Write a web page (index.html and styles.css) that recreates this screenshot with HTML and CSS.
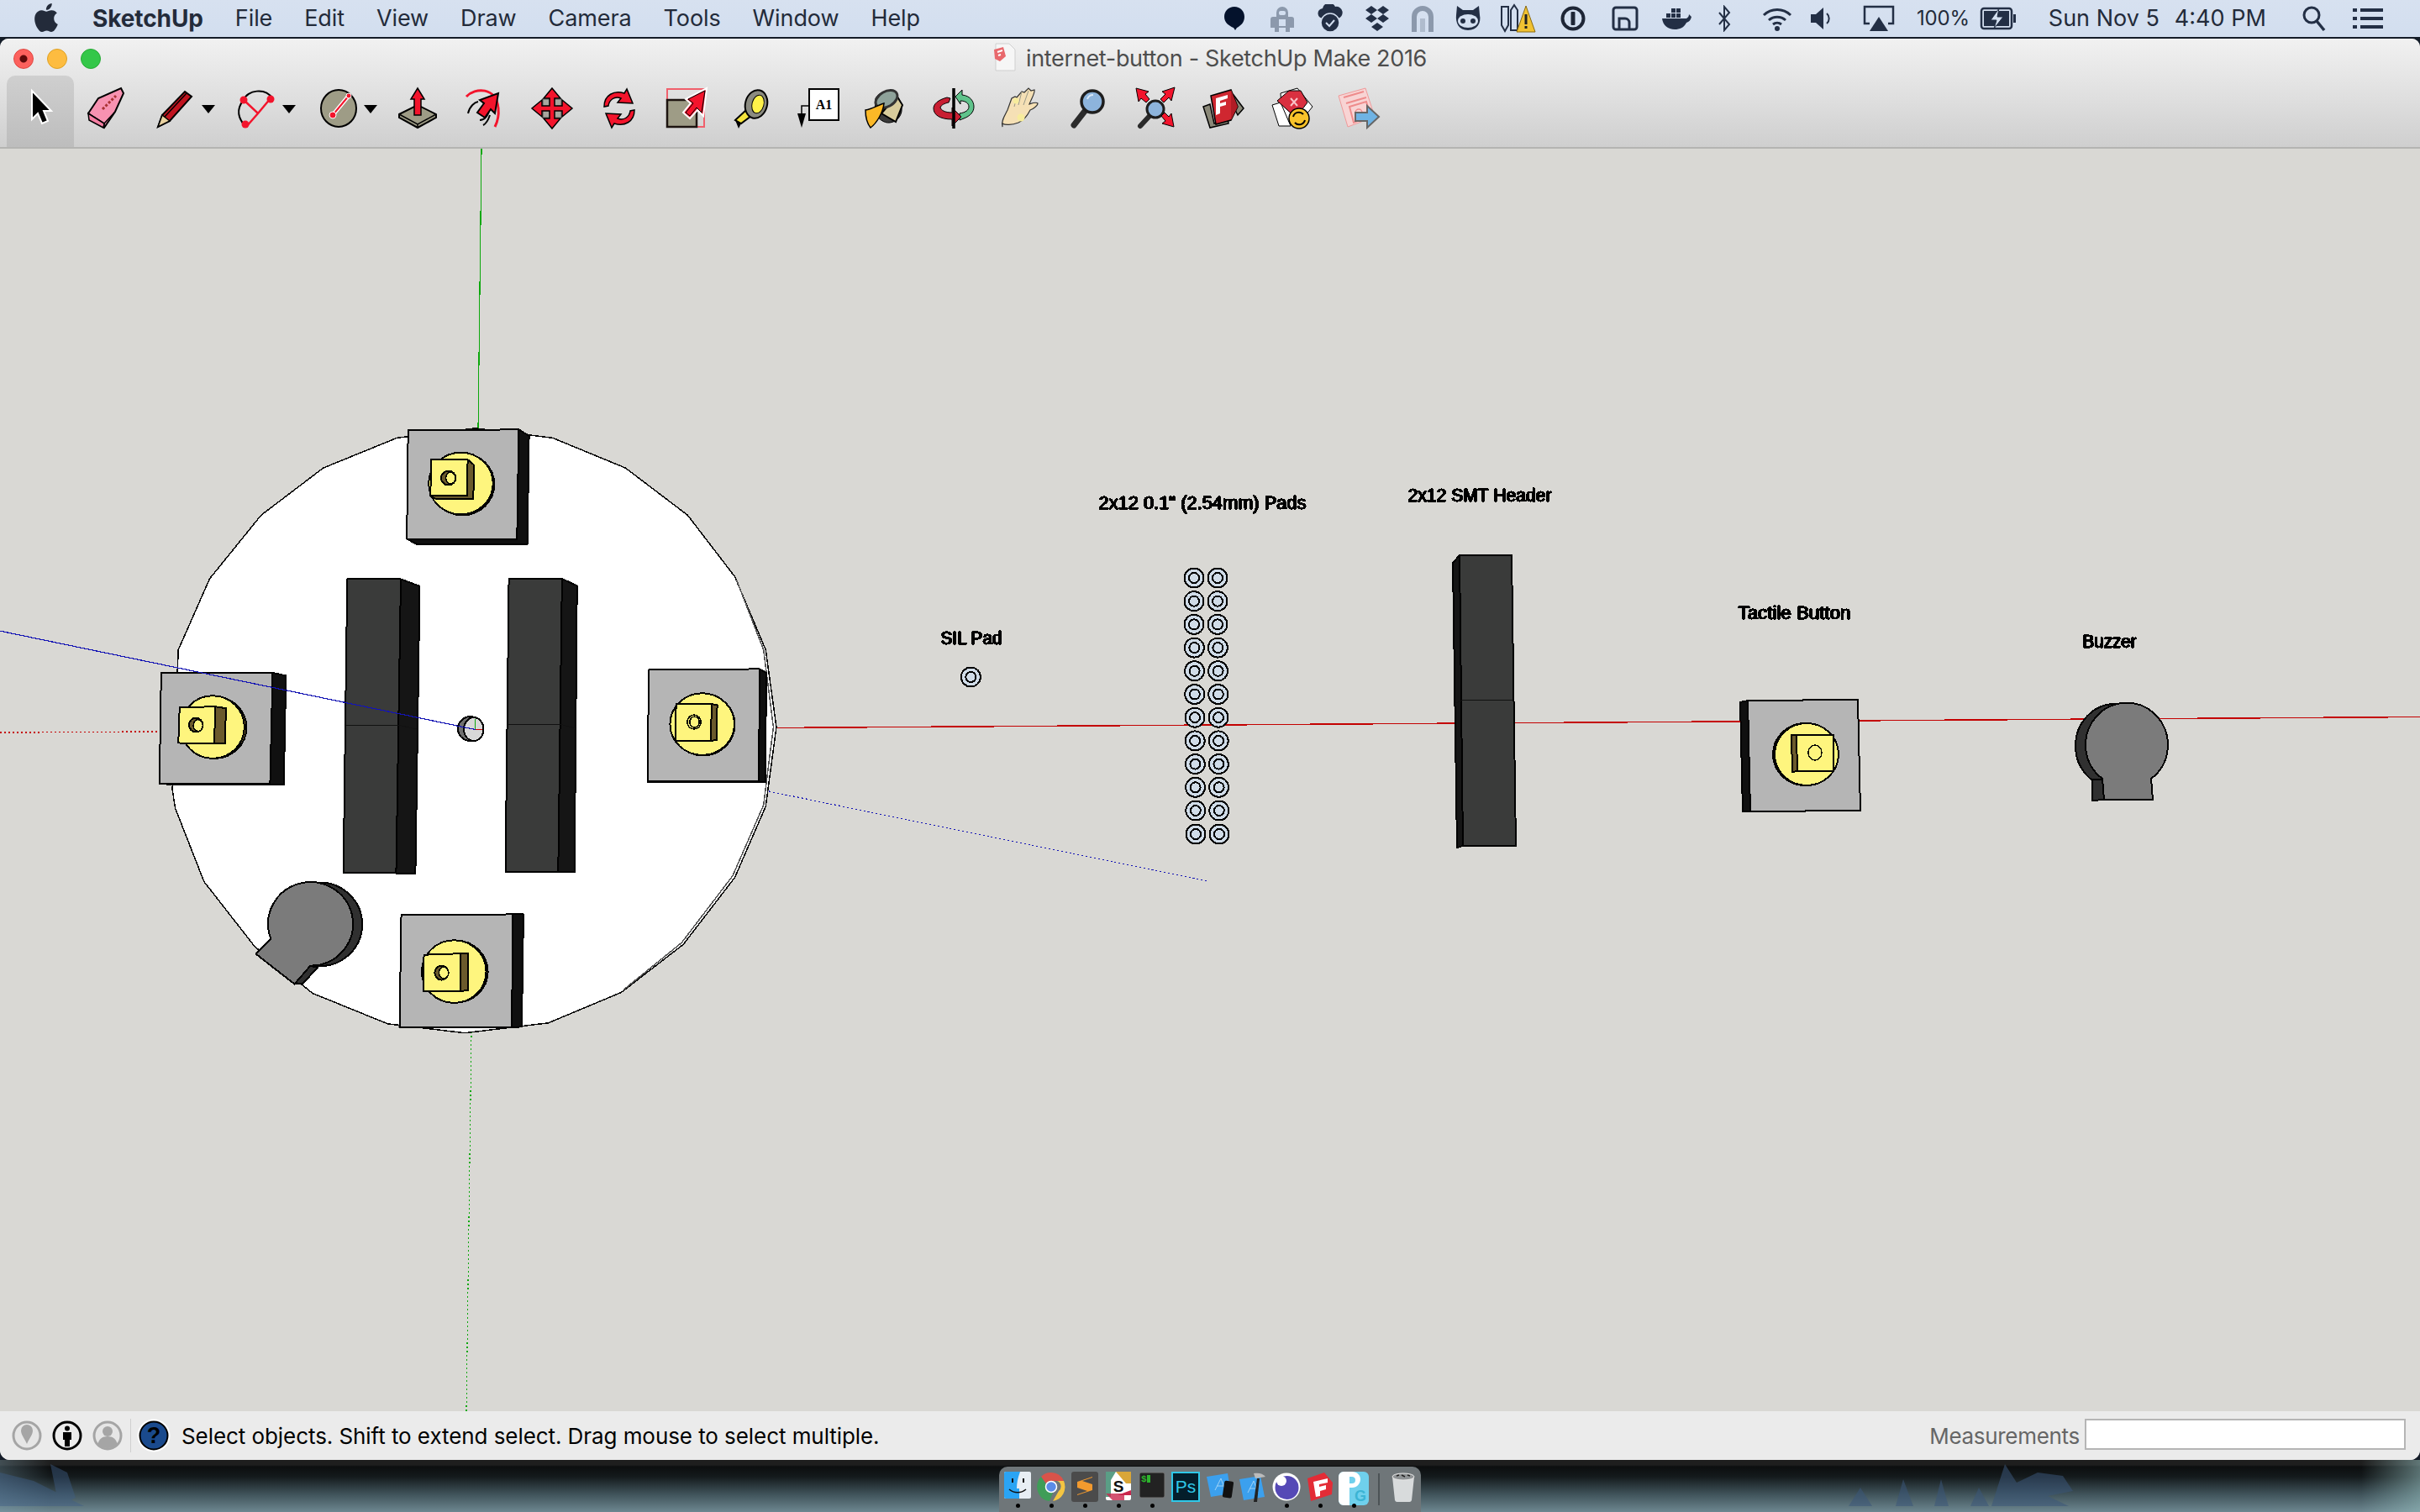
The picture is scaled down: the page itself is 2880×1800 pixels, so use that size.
FILE: index.html
```html
<!DOCTYPE html>
<html lang="en">
<head>
<meta charset="utf-8">
<title>internet-button - SketchUp Make 2016</title>
<link rel="stylesheet" href="styles.css">
</head>
<body>
<header class="menubar">
  <nav class="menus">
    <svg class="apple" width="34" height="36" viewBox="2 1.5 20 21"><path fill="#232b3a" d="M18.71 19.5c-.83 1.24-1.71 2.45-3.05 2.47-1.34.03-1.77-.79-3.29-.79-1.53 0-2 .77-3.27.82-1.31.05-2.3-1.32-3.14-2.53C4.25 17 2.94 12.45 4.7 9.39c.87-1.52 2.43-2.48 4.12-2.51 1.28-.02 2.5.87 3.29.87.78 0 2.26-1.07 3.81-.91.65.03 2.47.26 3.64 1.98-.09.06-2.17 1.28-2.15 3.81.03 3.02 2.65 4.03 2.68 4.04-.03.07-.42 1.44-1.38 2.83M13 3.5c.73-.83 1.94-1.46 2.94-1.5.13 1.17-.34 2.35-1.04 3.19-.69.85-1.83 1.51-2.95 1.42-.15-1.15.41-2.35 1.05-3.11z"/></svg>
    <span class="menu-app">SketchUp</span>
    <span>File</span><span>Edit</span><span>View</span><span>Draw</span><span>Camera</span><span>Tools</span><span>Window</span><span>Help</span>
  </nav>
  <div class="extras">
    <svg width="30" height="30" viewBox="0 0 30 30"><path fill="#04122c" d="M15 1c7 0 12 5 12 12 0 7-5 11-9 13l-2 3-2-3C9 24 3 20 3 13 3 6 8 1 15 1z"/></svg>
    <svg width="30" height="34" viewBox="0 0 30 34"><path fill="#8c99ac" d="M8 10a7 7 0 0 1 14 0v5h4a3 3 0 0 1 3 3v10h-5v5h-5v-5h-8v5H6v-5H1V18a3 3 0 0 1 3-3h4z"/><rect x="11" y="8" width="8" height="5" rx="2" fill="#d3dff0"/><rect x="11" y="18" width="8" height="8" fill="#d3dff0"/></svg>
    <svg width="32" height="34" viewBox="0 0 32 34"><path fill="#232f45" d="M8 17a6 6 0 0 1-1-12 8 8 0 0 1 15-2 7 7 0 0 1 3 14z"/><circle cx="16" cy="22" r="11" fill="#232f45" stroke="#d3dff0" stroke-width="1.5"/><path d="M11 22l4 4 6-7" fill="none" stroke="#d3dff0" stroke-width="2"/></svg>
    <svg width="30" height="32" viewBox="0 0 30 32"><path fill="#232f45" d="M8 1l7 5-7 5-7-5zM22 1l7 5-7 5-7-5zM8 11l7 5-7 5-7-5zM22 11l7 5-7 5-7-5zM15 21l7 5-7 5-7-5z"/></svg>
    <svg width="28" height="32" viewBox="0 0 28 32"><path fill="none" stroke="#8c99ac" stroke-width="6" d="M4 32V14a10 10 0 0 1 20 0v18"/><path fill="#8c99ac" d="M11 32V16h6v16z" opacity=".5"/></svg>
    <svg width="34" height="30" viewBox="0 0 34 30"><path fill="#232f45" d="M4 0l7 5h12l7-5 1 11c2 9-3 18-14 18S2 20 3 11z"/><ellipse cx="17" cy="18" rx="12" ry="8" fill="#d3dff0"/><circle cx="11" cy="18" r="3" fill="#232f45"/><circle cx="23" cy="18" r="3" fill="#232f45"/></svg>
    <svg width="44" height="36" viewBox="0 0 44 36"><path fill="#d3dff0" stroke="#232f45" stroke-width="2" d="M2 4h8v22l-4 7-4-7zM13 8l4-6 4 6v24h-8z"/><path fill="#f1c232" stroke="#8a6a10" d="M31 3l11 31H20z"/><rect x="29.500" y="13" width="3" height="12" fill="#222"/><rect x="29.500" y="27" width="3" height="3" fill="#222"/></svg>
    <svg width="30" height="30" viewBox="0 0 30 30"><circle cx="15" cy="15" r="12.500" fill="#d3dff0" stroke="#1e2636" stroke-width="4"/><rect x="12.500" y="7" width="5" height="16" rx="1" fill="#1e2636"/></svg>
    <svg width="32" height="30" viewBox="0 0 32 30"><rect x="2" y="2" width="28" height="26" rx="3" fill="none" stroke="#232f45" stroke-width="3"/><path d="M9 28V15h7a5 5 0 0 1 5 5v8" fill="none" stroke="#232f45" stroke-width="3"/></svg>
    <svg width="36" height="28" viewBox="0 0 36 28"><path fill="#232f45" d="M1 14h29c2-1 3-3 3-5l3 3c-1 4-3 6-6 7-3 6-8 8-14 8C8 27 2 22 1 14z"/><path fill="#232f45" d="M6 8h5v5H6zM12 8h5v5h-5zM18 8h5v5h-5zM12 2h5v5h-5zM18 2h5v5h-5z"/></svg>
    <svg width="18" height="32" viewBox="0 0 18 32"><path d="M3 9l12 14-6 7V2l6 7L3 23" fill="none" stroke="#232f45" stroke-width="2"/></svg>
    <svg width="38" height="32" viewBox="0 0 38 32"><path d="M3 12a23 23 0 0 1 32 0M9 18a15 15 0 0 1 20 0M14 23a8 8 0 0 1 10 0" fill="none" stroke="#232f45" stroke-width="3"/><circle cx="19" cy="28" r="3" fill="#232f45"/></svg>
    <svg width="26" height="30" viewBox="0 0 26 30"><path fill="#232f45" d="M1 10h6l9-8v26l-9-8H1z"/><path d="M20 9a8 8 0 0 1 0 12" fill="none" stroke="#232f45" stroke-width="2"/></svg>
    <svg class="air" width="38" height="32" viewBox="0 0 38 32"><path d="M8 22H2V2h34v20h-6" fill="none" stroke="#232f45" stroke-width="2.500"/><path fill="#232f45" d="M19 14l11 17H8z"/></svg>
    <span class="ex-text ex-pct">100%</span>
    <svg class="batt" width="44" height="28" viewBox="0 0 44 28"><rect x="2" y="2" width="36" height="24" rx="3" fill="none" stroke="#232f45" stroke-width="2.500"/><rect x="5" y="5" width="30" height="18" fill="#232f45"/><rect x="40" y="9" width="3" height="10" fill="#232f45"/><path d="M23 2L13 16h7l-3 10 11-14h-7z" fill="#d3dff0" stroke="#232f45"/></svg>
    <span class="ex-text ex-date">Sun Nov 5</span>
    <span class="ex-text ex-time">4:40 PM</span>
    <svg class="srch" width="30" height="32" viewBox="0 0 30 32"><circle cx="12" cy="12" r="9" fill="none" stroke="#232f45" stroke-width="3"/><path d="M18 19l9 11" stroke="#232f45" stroke-width="3.500"/></svg>
    <svg class="lst" width="36" height="28" viewBox="0 0 36 28"><path fill="#232f45" d="M0 2h5v4H0zM9 2h27v4H9zM0 12h5v4H0zM9 12h27v4H9zM0 22h5v4H0zM9 22h27v4H9z"/></svg>
  </div>
</header>

<main class="window">
  <div class="titlebar">
    <div class="lights"><span class="light red"></span><span class="light yellow"></span><span class="light green"></span></div>
    <div class="title">
      <svg width="28" height="34" viewBox="0 0 28 34"><path d="M3 1h16l7 7v25H3z" fill="#f6f6f6" stroke="#cfcfcf"/><path d="M1 8l11-3 3 11-7 6-6-3z" fill="#e8686c"/><path d="M5 11l6-2M6 15l3-1" stroke="#fff" stroke-width="2"/></svg>
      <span>internet-button - SketchUp Make 2016</span>
    </div>
  </div>
  <div class="toolbar">
    <div class="tool active"><svg viewBox="0 0 48 48"><path d="M14 3v34l7-7 5 12 7-3-5-12h9z" fill="#000" stroke="#fff" stroke-width="2"/></svg></div>
    <div class="tool"><svg viewBox="0 0 48 48"><path d="M1 30L13 12 40 0l3 6-10 22-13 19z" fill="#f792b1" stroke="#000" stroke-width="2"/><path d="M1 30l19 12 13-14M20 42v5" fill="none" stroke="#000" stroke-width="1.500"/><path d="M1 30l19 12-1 5-17-9z" fill="#f57fa3" stroke="#000" stroke-width="1.500"/><path d="M18 25l16-16" stroke="#a33" stroke-width="3" stroke-dasharray="3 2"/></svg></div>
    <div class="tool dd"><svg viewBox="0 0 48 48"><path d="M2 46l5-14L34 4l8 6-26 29z" fill="#c01420" stroke="#000" stroke-width="2"/><path d="M2 46l5-14 9 7z" fill="#e9d2a0" stroke="#000" stroke-width="1.500"/><path d="M10 34L36 6" stroke="#000" stroke-width="1.500"/></svg><i class="caret"></i></div>
    <div class="tool dd"><svg viewBox="0 0 48 48"><path d="M8 14C12 2 34-1 42 12M8 14C-2 26 2 36 10 46" fill="none" stroke="#000" stroke-width="2"/><path d="M8 14l17 16 15-18M25 30L11 46" fill="none" stroke="#f3142c" stroke-width="2.500"/><circle cx="8" cy="14" r="4.500" fill="#f3142c"/><circle cx="40" cy="13" r="4.500" fill="#f3142c"/><circle cx="10" cy="43" r="4.500" fill="#f3142c"/></svg><i class="caret"></i></div>
    <div class="tool dd"><svg viewBox="0 0 48 48"><ellipse cx="24" cy="24" rx="21" ry="22" fill="#9e9c86" stroke="#000" stroke-width="2"/><path d="M17 32L36 9" stroke="#fff" stroke-width="5"/><path d="M17 32L36 9" stroke="#f3142c" stroke-width="2"/><circle cx="17" cy="32" r="4" fill="#f3142c" stroke="#fff"/><circle cx="36" cy="9" r="3" fill="#f3142c" stroke="#fff"/></svg><i class="caret"></i></div>
    <div class="tool"><svg viewBox="0 0 48 48"><path d="M2 31L24 20l22 11v4L24 47 2 35z" fill="#9e9c86" stroke="#000" stroke-width="2"/><path d="M2 31l22 12 22-12M24 43v4" fill="none" stroke="#000" stroke-width="1.500"/><path d="M24 0l8 13h-4v19h-8V13h-4z" fill="#f3142c" stroke="#000" stroke-width="1.500"/></svg></div>
    <div class="tool"><svg viewBox="0 0 48 48"><path d="M2 10C12-1 38-2 40 24c1 9-1 16-4 22" fill="none" stroke="#f3142c" stroke-width="3"/><path d="M4 30c2-9 8-13 12-14M18 38c6 0 10-6 12-14M22 44c4-2 6-6 8-12" fill="none" stroke="#000" stroke-width="2"/><path d="M40 6l-4 24-5-5-7 10-9-6 8-11-5-4z" fill="#f3142c" stroke="#000" stroke-width="2"/></svg></div>
    <div class="tool"><svg viewBox="0 0 48 48"><rect x="13" y="13" width="22" height="22" fill="#a8a79f" stroke="#555"/><path d="M24 0l10 12h-7v9h9v-7l12 10-12 10v-7h-9v9h7L24 48 14 36h7v-9h-9v7L0 24l12-10v7h9v-9h-7z" fill="#f3142c" stroke="#000" stroke-width="1.500"/></svg></div>
    <div class="tool"><svg viewBox="0 0 48 48"><path d="M6 22C6 8 18 2 30 6l3-5 7 17-18-1 4-5c-8-3-14 2-15 9z" fill="#f3142c" stroke="#000" stroke-width="1.500"/><path d="M42 26c0 14-12 20-24 16l-3 5L8 30l18 1-4 5c8 3 14-2 15-9z" fill="#f3142c" stroke="#000" stroke-width="1.500"/></svg></div>
    <div class="tool"><svg viewBox="0 0 48 48"><rect x="1" y="1" width="44" height="45" fill="none" stroke="#f0606c" stroke-width="2"/><rect x="1" y="14" width="35" height="32" fill="#9e9c86" stroke="#1d1410" stroke-width="2.500"/><path d="M48 0l-4 33-7-7-9 10-8-7 9-11-6-5z" fill="#f3142c" stroke="#fff" stroke-width="2"/><path d="M46 3l-4 26-6-6-8 10-5-4 9-11-6-5z" fill="#f3142c" stroke="#000" stroke-width="1"/></svg></div>
    <div class="tool"><svg viewBox="0 0 48 48"><path d="M2 38l13-12 6 7L9 42z" fill="#f5e33b" stroke="#000" stroke-width="2"/><path d="M2 38l4 10 3-6z" fill="#000"/><ellipse cx="27" cy="19" rx="13" ry="17" transform="rotate(15 27 19)" fill="#8a8a80" stroke="#000" stroke-width="2"/><ellipse cx="29" cy="19" rx="7" ry="11" transform="rotate(15 29 19)" fill="#fff24a" stroke="#000"/></svg></div>
    <div class="tool"><svg viewBox="0 0 48 48"><rect x="12" y="1" width="35" height="37" fill="#fff" stroke="#000" stroke-width="2"/><text x="29.500" y="25" class="a1">A1</text><path d="M12 21H3v14" fill="none" stroke="#000" stroke-width="1.500"/><path d="M-2 30h10L3 47z" fill="#000"/></svg></div>
    <div class="tool"><svg viewBox="0 0 48 48"><path d="M13 12C22-2 42 1 44 24c1 6-4 16-14 17-7 1-15-5-18-13z" fill="#3b3b3b" stroke="#000"/><path d="M20 30l17 10 8-20-7-11z" fill="#d8cc9c" stroke="#000" stroke-width="2"/><ellipse cx="26" cy="13" rx="14" ry="9" transform="rotate(-30 26 13)" fill="#8ea29a" stroke="#333" stroke-width="3"/><path d="M1 26c8-1 15-6 22-8-1 11-9 24-16 29C3 42 1 34 1 26z" fill="#fbb827" stroke="#000" stroke-width="1.500"/></svg></div>
    <div class="tool"><svg viewBox="0 0 48 48"><path d="M26 10l8-8v6c10 1 14 8 14 14 0 6-4 11-12 14l-5 2v-8c7-1 11-4 11-8 0-4-4-7-10-7v4z" fill="#5fc38b" stroke="#000"/><path d="M20 12l-2 5c-5 1-9 3-10 6 1 3 5 6 14 6v-6l11 11-11 11v-8C8 37 0 32 0 24c0-5 5-10 16-13z" fill="#c81e32" stroke="#000"/><path d="M24 0v48" stroke="#000" stroke-width="3.500"/></svg></div>
    <div class="tool"><svg viewBox="0 0 48 48"><path d="M2 46c-2-7 3-14 6-20l5-14 4-2 2 1 6-7 3 1 5-5 3 3 4-1c1 4-4 11-6 17 3-1 8-3 10-1 0 3-6 7-9 8-3 6-7 12-14 15-8 3-16 3-19 1z" fill="#f5e0b5" stroke="#333" stroke-width="1.200"/><path d="M19 11l-3 11M25 4l-4 16M33 3l-6 17" fill="none" stroke="#998" stroke-width="1"/><circle cx="18" cy="15" r="3.500" fill="#f7ec9c"/><circle cx="24" cy="35" r="4.500" fill="#f7ec9c"/></svg></div>
    <div class="tool"><svg viewBox="0 0 48 48"><path d="M8 44L22 26" stroke="#2b2b2b" stroke-width="7" stroke-linecap="round"/><circle cx="30" cy="16" r="13" fill="#8db4dc" stroke="#1e1e1e" stroke-width="3.500"/><path d="M24 13c1-3 4-5 7-5" stroke="#d8e8f8" stroke-width="2" fill="none"/></svg></div>
    <div class="tool"><svg viewBox="0 0 48 48"><path d="M6 45L18 32" stroke="#2b2b2b" stroke-width="6" stroke-linecap="round"/><circle cx="24" cy="25" r="10" fill="#8db4dc" stroke="#1e1e1e" stroke-width="3"/><path d="M1 0l15 4-4 3 5 6-4 4-6-5-3 4zM47-1l-4 16-3-4-6 6-4-4 6-6-4-3zM46 46l-14-4 4-3-5-6 4-4 5 5 3-4z" fill="#f3142c" stroke="#000"/></svg></div>
    <div class="tool"><svg viewBox="0 0 48 48"><path d="M0 22l8-3 5 23 16-6 1 6-22 5z" fill="#8a8878" stroke="#000" stroke-width="1.500"/><path d="M36 8l12 16-7 8-6-12z" fill="#8a8878" stroke="#000" stroke-width="1.500"/><path d="M9 9l24-7 8 20-8 16-18 5z" fill="#cf2730" stroke="#000" stroke-width="1.500"/><path d="M33 2l8 20-8 16z" fill="#b01c25"/><path d="M15 12l14-4v4l-9 3v3l7-2v4l-7 2v8l-5 2z" fill="#fff"/></svg></div>
    <div class="tool"><svg viewBox="0 0 48 48"><path d="M12 6l20-6 18 22-16 20-20-4z" fill="#fff" stroke="#000"/><path d="M2 20l10-3 12 28-14 0z" fill="#fff" stroke="#000"/><path d="M8 15L22 3h14l8 14-14 18z" fill="#d93040" stroke="#000"/><path d="M24 12l8 9M32 12l-8 9" stroke="#f9c5c9" stroke-width="2"/><circle cx="34" cy="36" r="12" fill="#f9c32a" stroke="#000" stroke-width="1.500"/><path d="M27 34a7 7 0 0 1 12-3M41 38a7 7 0 0 1-12 3" fill="none" stroke="#000" stroke-width="2"/></svg></div>
    <div class="tool"><svg viewBox="0 0 48 48"><path d="M1 9L33 0l11 34-32 12z" fill="#f8d4d4" stroke="#f09a9a"/><path d="M7 11l24-7M10 18l24-7M14 22l20-6 5 17-20 8z" fill="none" stroke="#ee8c8c" stroke-width="2"/><circle cx="25" cy="29" r="4" fill="none" stroke="#ee8c8c" stroke-width="1.500"/><path d="M21 29h14v-8l14 13-14 13v-8H21z" fill="#6fb3e4" stroke="#666" stroke-width="2"/></svg></div>
  </div>

  <div class="viewport">
    <svg class="scene" width="2880" height="1504" viewBox="0 177 2880 1504">
      <defs>
        <filter id="jag" x="-5%" y="-20%" width="110%" height="140%" color-interpolation-filters="sRGB">
          <feOffset in="SourceGraphic" dx="1" dy="0" result="shift"/>
          <feMerge result="both"><feMergeNode in="SourceGraphic"/><feMergeNode in="shift"/></feMerge>
          <feComponentTransfer in="both"><feFuncA type="discrete" tableValues="0 1 1 1"/></feComponentTransfer>
        </filter>
      </defs>
      <path class="ax-g" d="M573 177L569 512"/>
      <path class="ax-g dot" d="M561 1228L555 1681"/>
      <path class="ax-r" d="M920 866.500L2880 853.500"/>
      <path class="ax-r dot" d="M0 872L190 871"/>
      <path class="ax-b dot" d="M915 942L1437 1049"/>

      <g transform="matrix(.5102 0 0 .4975 150 480)">
        <polygon class="disk" points="632,83 460,155 315,268 195,420 122,590 108,925 115,970 182,1145 300,1300 435,1412 610,1485 790,1507 985,1483 1155,1410 1300,1295 1420,1135 1492,965 1517,775 1492,590 1420,415 1310,268 1165,155 995,83 815,60"/>
        <polyline class="rim" points="1160,1404 1296,1291 1415,1131 1487,962 1510,775 1487,590 1424,423"/>

        <polygon class="side" points="916,63 940,78 936,338 680,338 655,325 912,325"/>
        <polygon class="plate" points="658,65 916,63 912,325 655,325"/>
        <ellipse class="brown" cx="785" cy="194" rx="74" ry="74"/>
        <ellipse class="yel" cx="781" cy="192" rx="75" ry="74"/>
        <polygon class="brown" points="797,135 812,148 810,230 725,230 710,222 795,222"/>
        <polygon class="yel" points="712,135 797,135 795,222 710,222"/>
        <ellipse class="brown" cx="752" cy="179" rx="17" ry="17"/><ellipse class="yel thin" cx="757" cy="179" rx="11" ry="14"/>

        <polygon class="side" points="342,645 373,652 368,913 110,913 78,910 336,910"/>
        <polygon class="plate" points="82,645 342,645 336,910 78,910"/>
        <ellipse class="brown" cx="207" cy="776" rx="74" ry="74"/>
        <ellipse class="yel" cx="202" cy="775" rx="74" ry="75"/>
        <polygon class="brown" points="208,726 233,730 231,815 206,815"/>
        <polygon class="yel" points="125,728 208,726 206,815 122,813"/>
        <ellipse class="brown" cx="163" cy="770" rx="16" ry="17"/><ellipse class="yel thin" cx="168" cy="771" rx="11" ry="14"/>

        <polygon class="side" points="1478,636 1493,645 1492,906 1217,906 1476,904"/>
        <polygon class="plate" points="1219,638 1478,636 1476,904 1217,904"/>
        <ellipse class="brown" cx="1346" cy="769" rx="74" ry="74"/>
        <ellipse class="yel" cx="1344" cy="768" rx="75" ry="74"/>
        <polygon class="brown" points="1366,720 1379,722 1378,806 1364,808"/>
        <polygon class="yel" points="1283,720 1366,720 1364,808 1282,808"/>
        <ellipse class="yel thin" cx="1325" cy="763" rx="16" ry="17"/><ellipse class="yel thin" cx="1326" cy="763" rx="11" ry="13"/>

        <polygon class="side" points="902,1223 927,1223 923,1492 900,1494"/>
        <polygon class="plate" points="642,1225 902,1223 900,1494 638,1494"/>
        <ellipse class="brown" cx="770" cy="1360" rx="74" ry="74"/>
        <ellipse class="yel" cx="765" cy="1360" rx="75" ry="75"/>
        <polygon class="brown" points="780,1317 798,1316 798,1405 780,1407"/>
        <polygon class="yel" points="695,1320 780,1317 780,1407 693,1407"/>
        <ellipse class="brown" cx="736" cy="1363" rx="16" ry="17"/><ellipse class="yel thin" cx="741" cy="1363" rx="11" ry="14"/>

        <polygon class="hdr-side" points="641,421 685,438 675,1125 630,1125"/>
        <polygon class="hdr" points="516,421 641,421 630,1123 507,1123"/>
        <polyline class="seam" points="512,770 635,770 678,780"/>
        <polygon class="hdr-side" points="1017,420 1052,437 1046,1122 1008,1122"/>
        <polygon class="hdr" points="893,420 1017,420 1008,1122 885,1122"/>
        <polyline class="seam" points="889,768 1012,768 1048,778"/>

        <circle class="org-back" cx="803" cy="779" r="29"/>
        <ellipse class="org" cx="811" cy="780" rx="23" ry="28"/>
        <path class="ax-g-thin" d="M815 755V781"/><path class="ax-r-thin" d="M815 781H832"/>
        <path class="ax-b-thin" d="M-294 545L815 781"/>

        <ellipse class="bz-back" cx="452" cy="1247" rx="99" ry="100"/>
        <polygon class="bz-back" points="393,1390 413,1388 447,1350 420,1345"/>
        <path class="bz" d="M338 1282A99 100 0 1 1 430 1346L393 1390L303 1318Z"/>
      </g>

      <g class="pads">
        <ellipse cx="1155.400" cy="806" rx="11.500" ry="11.500"/><ellipse class="in" cx="1155.400" cy="806" rx="6" ry="6"/>
        <g id="pr1"><ellipse cx="1421" cy="688" rx="11.500" ry="11.500"/><ellipse class="in" cx="1421" cy="688" rx="6" ry="6"/><ellipse cx="1449" cy="688" rx="11.500" ry="11.500"/><ellipse class="in" cx="1449" cy="688" rx="6" ry="6"/></g>
        <use href="#pr1" y="27.700"/>
        <use href="#pr1" y="55.400"/>
        <use href="#pr1" x=".4" y="83.100"/>
        <use href="#pr1" x=".6" y="110.800"/>
        <use href="#pr1" x=".8" y="138.500"/>
        <use href="#pr1" x="1" y="166.200"/>
        <use href="#pr1" x="1.200" y="193.900"/>
        <use href="#pr1" x="1.400" y="221.600"/>
        <use href="#pr1" x="1.600" y="249.300"/>
        <use href="#pr1" x="1.800" y="277"/>
        <use href="#pr1" x="2" y="305"/>
      </g>

      <polygon class="hdr-side" points="1729,670 1737,661 1741,1007 1734,1009"/>
      <polygon class="hdr" points="1737,661 1799,661 1804,1007 1741,1007"/>
      <polyline class="seam" points="1731,838 1739,834 1802,833"/>

      <polygon class="side" points="2071,836 2080,834 2083,966 2074,966"/>
      <polygon class="plate" points="2080,834 2211,833 2214,965 2083,966"/>
      <ellipse class="brown" cx="2148" cy="898" rx="38" ry="37"/>
      <ellipse class="yel" cx="2150" cy="898" rx="38" ry="37"/>
      <polygon class="brown" points="2132,875 2138,875 2139,918 2133,919"/>
      <polygon class="yel" points="2138,875 2182,875 2182,918 2139,918"/>
      <ellipse class="yel thin" cx="2160" cy="896" rx="8" ry="9"/>

      <ellipse class="bz-back" cx="2517" cy="888" rx="47" ry="50"/>
      <polygon class="bz-back" points="2490,928 2503,928 2504,952 2490,953"/>
      <path class="bz" d="M2502 927A49 50 0 1 1 2560 927L2562 952L2504 952Z"/>

      <g filter="url(#jag)">
        <text class="lbl" x="1307" y="606" textLength="247" lengthAdjust="spacingAndGlyphs">2x12 0.1" (2.54mm) Pads</text>
        <text class="lbl" x="1675" y="597" textLength="171" lengthAdjust="spacingAndGlyphs">2x12 SMT Header</text>
        <text class="lbl" x="1119" y="767" textLength="73" lengthAdjust="spacingAndGlyphs">SIL Pad</text>
        <text class="lbl" x="2068" y="737" textLength="134" lengthAdjust="spacingAndGlyphs">Tactile Button</text>
        <text class="lbl" x="2478" y="771" textLength="64" lengthAdjust="spacingAndGlyphs">Buzzer</text>
      </g>
    </svg>
  </div>

  <footer class="statusbar">
    <div class="status-icons">
      <svg width="36" height="36" viewBox="0 0 36 36"><circle cx="18" cy="18" r="16" fill="#e6e6e6" stroke="#a5a5a5" stroke-width="3"/><path d="M11 12a7 7 0 0 1 14 0c0 5-4 9-7 16-3-7-7-11-7-16z" fill="#a5a5a5"/></svg>
      <svg width="36" height="36" viewBox="0 0 36 36"><circle cx="18" cy="18" r="16" fill="#ebebeb" stroke="#000" stroke-width="3"/><circle cx="18" cy="9.500" r="3" fill="#000"/><path d="M13 14h10v9h-2v8h-6v-8h-2z" fill="#000"/></svg>
      <svg width="36" height="36" viewBox="0 0 36 36"><circle cx="18" cy="18" r="16" fill="#e6e6e6" stroke="#a5a5a5" stroke-width="3"/><circle cx="18" cy="13" r="6" fill="#a5a5a5"/><path d="M6 30c1-8 6-11 12-11s11 3 12 11c-6 4-18 4-24 0z" fill="#a5a5a5"/></svg>
      <i class="status-sep"></i>
      <svg class="help" width="40" height="40" viewBox="0 0 40 40"><circle cx="20" cy="20" r="19.500" fill="#fff"/><circle cx="20" cy="20" r="16.500" fill="#1a4a8d" stroke="#000" stroke-width="2"/><text x="20" y="29" class="help-q">?</text></svg>
    </div>
    <span class="status-msg">Select objects. Shift to extend select. Drag mouse to select multiple.</span>
    <div class="measure"><label for="vcb">Measurements</label><input id="vcb" type="text"></div>
  </footer>
</main>

<section class="desk">
  <svg class="wall" width="2880" height="55" viewBox="0 1745 2880 55">
    <path fill="#3a5578" opacity=".55" d="M2200 1800l14-22 14 22zM2256 1800l9-32 12 32zM2302 1800l8-32 9 32zM2345 1800l10-22 12 22zM2370 1800l16-50 14 22 25 -12 30 4 12 18-30 6 25 12z"/>
    <path fill="#3f5e85" opacity=".45" d="M0 1760l40 10 60 30H0zM60 1750l20 10 10 30-20 10z"/>
  </svg>
  <div class="dock">
    <div class="dock-item on"><svg width="32" height="32" viewBox="0 0 32 32"><rect width="32" height="32" rx="2" fill="#e8eef4"/><path d="M0 2a2 2 0 0 1 2-2h17c-3 8-4 14-4 20h3v12H2a2 2 0 0 1-2-2z" fill="#2aa4f4"/><path d="M10 8v5M23 8v5" stroke="#111" stroke-width="2"/><path d="M6 21c6 5 14 5 20 0" stroke="#111" stroke-width="1.500" fill="none"/></svg></div>
    <div class="dock-item on"><svg width="34" height="36" viewBox="0 0 34 36"><path d="M17 1a16 17 0 0 1 15 10H17a7 7 0 0 0-6 3L5 6a16 17 0 0 1 12-5z" fill="#d9534a"/><path d="M32 11a16 17 0 0 1-13 24l7-12a7 7 0 0 0-2-12z" fill="#f4c542"/><path d="M5 6l7 11a7 7 0 0 0 7 8l-4 10A16 17 0 0 1 5 6z" fill="#3f9d58"/><circle cx="17" cy="18" r="6.500" fill="#5b8ce8" stroke="#fff" stroke-width="1.500"/></svg></div>
    <div class="dock-item on"><svg width="32" height="36" viewBox="0 0 32 36"><rect width="32" height="36" rx="3" fill="#4b4b4b"/><path d="M25 6L7 12v7l12 4-12 4v1l18-6v-7L13 11l12-4z" fill="#f29a2e"/></svg></div>
    <div class="dock-item on"><svg width="30" height="34" viewBox="0 0 30 34"><rect width="30" height="34" rx="2" fill="#fff"/><path d="M0 0h12L6 10v20H0z" fill="#5a9e86"/><path d="M12 0h18v14H24z" fill="#d9a638"/><path d="M30 14v14H14l16-6z" fill="#c9274d"/><path d="M0 26l8 8h14v-8z" fill="#c9274d" opacity=".8"/><text x="15" y="24" class="slack-s">S</text></svg></div>
    <div class="dock-item on"><svg width="32" height="32" viewBox="0 0 32 32"><rect x="1" y="1" width="30" height="30" rx="2" fill="#222" stroke="#777"/><text x="3" y="12" class="term">$</text><rect x="10" y="4" width="4" height="9" fill="#2cb52c"/></svg></div>
    <div class="dock-item"><svg width="34" height="36" viewBox="0 0 34 36"><rect x="1" y="1" width="32" height="34" fill="#041e2b" stroke="#2fc8e8" stroke-width="2"/><text x="17" y="25" class="ps">Ps</text></svg></div>
    <div class="dock-item"><svg width="34" height="34" viewBox="0 0 34 34"><path d="M2 6l25-4 4 24-24 4z" fill="#3ba0ee"/><path d="M12 22l7-14 5 14M14 17h9" stroke="#9fd2f7" fill="none"/><rect x="22" y="11" width="11" height="20" rx="2" transform="rotate(8 27 21)" fill="#111"/></svg></div>
    <div class="dock-item"><svg width="34" height="36" viewBox="0 0 34 36"><path d="M1 9l25-4 5 25-25 4z" fill="#3ba0ee"/><path d="M11 25l7-14 5 14M13 20h9" stroke="#9fd2f7" fill="none"/><path d="M22 8l-4 28h4l3-28z" fill="#222"/><path d="M18 2c6-1 11 0 14 4l-12 2z" fill="#bbb"/></svg></div>
    <div class="dock-item on"><svg width="34" height="36" viewBox="0 0 34 36"><circle cx="17" cy="18" r="16.500" fill="#fff"/><ellipse cx="17.500" cy="19" rx="14" ry="14" fill="#5549b6"/><circle cx="11" cy="11" r="6" fill="#fff"/></svg></div>
    <div class="dock-item on"><svg width="32" height="36" viewBox="0 0 32 36"><path d="M1 8L21 1l10 12-1 14L5 35z" fill="#e32c36"/><path d="M8 12l17-4v5L15 15v3l8-2v5l-7 2v6l-5 1z" fill="#fff"/></svg></div>
    <div class="dock-item on"><svg width="36" height="40" viewBox="0 0 36 40"><rect width="36" height="40" rx="6" fill="#6fd0ec"/><path d="M0 6a6 6 0 0 1 6-6h10c6 0 10 4 10 9s-4 10-10 10h-3v21H6a6 6 0 0 1-6-6z" fill="#fff"/><path d="M13 6h3c2 0 4 1 4 4s-2 4-4 4h-3z" fill="#6fd0ec"/><text x="26" y="35" class="pg">G</text></svg></div>
    <i class="dock-sep"></i>
    <div class="dock-item"><svg width="28" height="36" viewBox="0 0 28 36"><path d="M1 6h26l-3 28a3 3 0 0 1-3 2H7a3 3 0 0 1-3-2z" fill="#d8dbdc"/><ellipse cx="14" cy="6" rx="13" ry="4" fill="#8e9294" stroke="#e8e8e8"/><path d="M6 5l3-1M12 4l4 2M19 4l3 1" stroke="#222" stroke-width="1.500"/></svg></div>
  </div>
</section>
</body>
</html>
```

FILE: styles.css
```css
* { box-sizing: border-box; }
html, body { margin: 0; padding: 0; }
body {
  width: 2880px;
  height: 1800px;
  overflow: hidden;
  display: flex;
  flex-direction: column;
  background: #141c28;
  font-family: Inter, "Liberation Sans", sans-serif;
}

/* menu bar */
.menubar {
  flex: 0 0 46px;
  height: 46px;
  display: flex;
  justify-content: space-between;
  background: linear-gradient(#d7e1f0, #d2deef);
  border-bottom: 2px solid #141c28;
  color: #232b3a;
  font-size: 27px;
  line-height: 44px;
}
.menus { display: flex; align-items: center; gap: 38px; padding-left: 38px; letter-spacing: -.1px; }
.apple { margin-right: 0; margin-top: -2px; }
.menu-app { font-size: 28px; font-weight: 700; }
.extras {
  display: grid;
  grid-template-columns: 57px 57px 57px 56px 52px 56px 64px 66px 58px 64px 50px 76px 28px 100px auto auto auto auto auto auto;
  justify-content: start;
  width: 1440px;
  align-items: center;
  justify-items: center;
}
.extras .air { justify-self: end; margin-right: 26px; }
.ex-text { font-size: 27px; white-space: nowrap; }
.ex-pct { font-size: 24px; letter-spacing: -.2px; }
.batt { margin-left: 12px; }
.ex-date { margin-left: 38px; }
.ex-time { margin-left: 18px; }
.srch { margin-left: 42px; }
.lst { margin-left: 31px; }

/* window */
.window {
  flex: 0 0 1692px;
  display: flex;
  flex-direction: column;
  border-radius: 10px 10px 12px 12px;
  overflow: hidden;
  background: #ebebeb;
}
.titlebar {
  flex: 0 0 44px;
  display: grid;
  grid-template-columns: 1fr auto 1fr;
  align-items: center;
  background: linear-gradient(#f1f1f1, #e6e6e6);
  padding-top: 3px;
}
.lights { display: flex; gap: 16px; padding-left: 16px; }
.light { width: 24px; height: 24px; border-radius: 50%; display: block; }
.red { background: radial-gradient(circle, #5e0a0a 0 4px, #fc615d 5px); border: 1px solid #e0443e; }
.yellow { background: #fdbc40; border: 1px solid #dea123; }
.green { background: #34c749; border: 1px solid #27aa35; }
.title { display: flex; align-items: center; gap: 11px; color: #4d4d4d; font-size: 27px; letter-spacing: -.32px; white-space: nowrap; }
.title svg { margin-top: -4px; }

.toolbar {
  flex: 0 0 87px;
  display: grid;
  grid-template-columns: 80px 80px 96px 97px 96px 80px 80px 80px 80px 80px 80px 76px 80px 83px 78px 80px 82px 80px 80px 80px;
  padding-left: 8px;
  background: linear-gradient(#e6e6e6, #cfcfcf);
  border-bottom: 2px solid #b4b4b2;
}
.tool {
  height: 85px;
  display: flex;
  align-items: flex-start;
  justify-content: center;
  padding-top: 15px;
  position: relative;
}
.tool svg { width: 48px; height: 48px; overflow: visible; }
.tool.active { background: linear-gradient(#cfcfcf, #bdbdbd); border-radius: 10px 10px 0 0; }
.tool.dd { justify-content: flex-start; padding-left: 18px; }
.caret {
  width: 0;
  height: 0;
  margin: 20px 0 0 6px;
  border-left: 8px solid transparent;
  border-right: 8px solid transparent;
  border-top: 10px solid #000;
}
.a1 { font: 700 16px "Liberation Serif", serif; text-anchor: middle; fill: #000; }

/* 3D viewport */
.viewport { flex: 0 0 1503px; background: #d9d8d4; overflow: hidden; }
.scene { display: block; }
.scene * { vector-effect: non-scaling-stroke; shape-rendering: crispEdges; }
.scene polygon, .scene ellipse, .scene polyline, .scene circle, .scene .bz { stroke: #000; stroke-width: 2; stroke-linejoin: round; }
.ax-g, .ax-g-thin { stroke: #0ca80c; stroke-width: 1.200; fill: none; }
.ax-r, .ax-r-thin { stroke: #c40000; stroke-width: 1.500; fill: none; }
.ax-b, .ax-b-thin { stroke: #1414b4; stroke-width: 1.200; fill: none; }
.dot { stroke-dasharray: 2 3; }
.scene .disk { fill: #fff; stroke-width: 1.500; }
.scene .rim { fill: none; stroke: #555; stroke-width: 1.500; }
.side { fill: #101010; }
.plate { fill: #b5b5b5; }
.brown { fill: #6b5a2c; }
.yel { fill: #fef57e; }
.scene .thin { stroke-width: 1.500; }
.hdr { fill: #3a3b3a; }
.hdr-side { fill: #151515; }
.scene .seam { fill: none; stroke-width: 1; stroke: #111; }
.org-back { fill: #6f6f6f; }
.org { fill: #d8d8d8; }
.bz { fill: #7b7b7b; }
.bz-back { fill: #303030; }
.pads ellipse { fill: #d0dce8; }
.lbl { font: 22px "Liberation Sans", sans-serif; fill: #000; stroke: #000; stroke-width: .3; }

/* status bar */
.statusbar {
  flex: 0 0 58px;
  display: flex;
  align-items: center;
  background: #ebebeb;
  color: #000;
  font-size: 26px;
}
.status-icons { display: flex; align-items: center; gap: 12px; padding-left: 14px; }
.status-sep { width: 1px; height: 40px; background: #cfcfcf; margin-left: -3px; }
.help { margin-left: -5px; margin-right: 13px; }
.help-q { font: 700 27px "Liberation Sans", sans-serif; fill: #000; text-anchor: middle; }
.status-msg { letter-spacing: -.07px; white-space: nowrap; }
.measure { margin-left: auto; display: flex; align-items: center; gap: 6px; padding-right: 17px; color: #666; }
.measure label { letter-spacing: -.3px; }
.measure input {
  width: 382px;
  height: 37px;
  margin-top: -4px;
  background: #fff;
  border: 2px solid #b5b5b5;
  border-radius: 0;
  padding: 0;
}

/* desktop strip and dock */
.desk {
  flex: 1;
  position: relative;
  display: flex;
  justify-content: center;
  align-items: flex-end;
  background:
    linear-gradient(90deg, rgba(130,165,180,.35), transparent 60px, transparent 2810px, rgba(150,190,190,.55)),
    linear-gradient(#1e1e1e 0, #1e1e1e 6px, #0c0e0f 8px, #141a1c 20px, #3e5158 40px, #6d8790 62px);
}
.wall { position: absolute; left: 0; top: 0; }
.dock {
  position: relative;
  width: 502px;
  height: 54px;
  display: flex;
  align-items: flex-start;
  padding: 5px 0 0 2px;
  background: #6f7679;
  border-radius: 10px 10px 0 0;
}
.dock-item { position: relative; width: 40px; height: 49px; display: flex; justify-content: center; flex: 0 0 40px; }
.dock-item svg { display: block; margin-top: 1px; }
.dock-item.on::after {
  content: "";
  position: absolute;
  left: 17.500px;
  top: 39px;
  width: 5px;
  height: 5px;
  border-radius: 50%;
  background: #000;
}
.dock-sep { flex: 0 0 2px; height: 38px; background: #4c5356; margin: 3px 8px 0 9px; }
.slack-s { font: 700 19px "Liberation Sans", sans-serif; text-anchor: middle; fill: #111; }
.term { font: 700 11px "Liberation Mono", monospace; fill: #2cb52c; }
.ps { font: 400 21px "Liberation Sans", sans-serif; text-anchor: middle; fill: #2fc8e8; }
.pg { font: 700 18px "Liberation Sans", sans-serif; text-anchor: middle; fill: #3cb4d4; }
```
